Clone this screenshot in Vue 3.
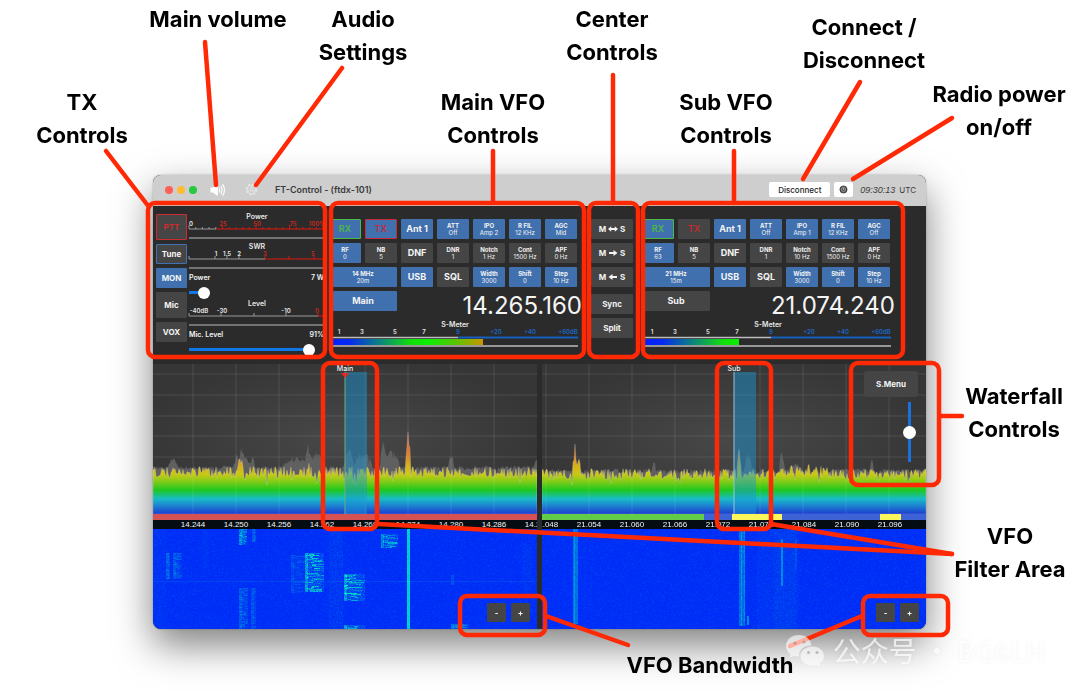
<script setup>
import { onMounted, ref } from 'vue'

const W = 1080
const H = 694

const captions = [
  { x: 218, y: 3, lines: ['Main volume'] },
  { x: 363, y: 3, lines: ['Audio', 'Settings'] },
  { x: 612, y: 3, lines: ['Center', 'Controls'] },
  { x: 864, y: 11, lines: ['Connect /', 'Disconnect'] },
  { x: 82, y: 86, lines: ['TX', 'Controls'] },
  { x: 493, y: 86, lines: ['Main VFO', 'Controls'] },
  { x: 726, y: 86, lines: ['Sub VFO', 'Controls'] },
  { x: 999, y: 78, lines: ['Radio power', 'on/off'] },
  { x: 1014, y: 380, lines: ['Waterfall', 'Controls'] },
  { x: 1010, y: 520, lines: ['VFO', 'Filter Area'] },
  { x: 710, y: 649, lines: ['VFO Bandwidth'] },
]
const captionStyle = (c) => ({ left: (c.x / W) * 100 + '%', top: (c.y / H) * 100 + '%' })

const frames = [
  [148, 203, 177, 154],
  [331, 203, 253, 154],
  [589, 203, 49, 154],
  [643, 203, 260, 154],
  [323, 363, 54, 166],
  [717, 363, 54, 166],
  [851, 363, 88, 122],
  [460, 596, 85, 39],
  [863, 596, 85, 39],
]
const leaders = [
  [205, 42, 216, 185],
  [342, 68, 256, 185],
  [106, 151, 149, 207],
  [493, 151, 493, 201],
  [613, 75, 613, 203],
  [734, 151, 734, 203],
  [860, 82, 803, 179],
  [952, 118, 853, 179],
  [940, 416, 962, 416],
  [378, 524, 952, 554],
  [771, 524, 952, 554],
  [546, 616, 628, 645],
  [862, 616, 790, 646],
]

const txButtons = [
  { t: 'PTT', c: 'tall ptt' },
  { t: 'Tune', c: 'tune' },
  { t: 'MON', c: 'on' },
  { t: 'Mic', c: 'tall' },
  { t: 'VOX', c: '' },
]
const powerMeter = {
  title: 'Power', split: 27,
  labels: [[2, '0'], [34, '25', 1], [68, '50', 1], [104, '75', 1], [128, '100%', 1]],
  ticks: Array.from({ length: 22 }, (_, i) => [i * 6.7, i % 5 ? 2 : 4]),
}
const swrMeter = {
  title: 'SWR', split: 76,
  labels: [[27, '1'], [38, '1.5'], [50, '2'], [76, '3', 1], [124, '5', 1]],
  ticks: [[0, 3], [26, 3], [38, 3], [50, 3], [76, 3], [100, 3], [125, 3]],
}
const micMeter = {
  title: 'Level', split: 129,
  labels: [[10, '-40dB'], [33, '-30'], [97, '-10'], [128, '0', 1]],
  ticks: [[0, 3], [32, 3], [65, 3], [97, 3], [129, 3]],
}

const vfos = [
  {
    id: 'main', name: 'Main', nameOn: true, freq: '14.265.160', level: 154,
    cells: [
      { t: 'RX', c: 'on rx' }, { t: 'TX', c: 'on txkey' }, { t: 'Ant 1', c: 'on' }, { t: 'ATT', s: 'Off', c: 'on' },
      { t: 'IPO', s: 'Amp 2', c: 'on' }, { t: 'R FIL', s: '12 KHz', c: 'on' }, { t: 'AGC', s: 'Mid', c: 'on' },
      { t: 'RF', s: '0', c: 'on' }, { t: 'NB', s: '5' }, { t: 'DNF' }, { t: 'DNR', s: '1' },
      { t: 'Notch', s: '1 Hz' }, { t: 'Cont', s: '1500 Hz' }, { t: 'APF', s: '0 Hz' },
      { t: '14 MHz', s: '20m', c: 'on wide' }, { t: 'USB', c: 'on' }, { t: 'SQL' },
      { t: 'Width', s: '3000', c: 'on' }, { t: 'Shift', s: '0', c: 'on' }, { t: 'Step', s: '10 Hz', c: 'on' },
    ],
  },
  {
    id: 'sub', name: 'Sub', nameOn: false, freq: '21.074.240', level: 97,
    cells: [
      { t: 'RX', c: 'on rx' }, { t: 'TX', c: 'txoff' }, { t: 'Ant 1', c: 'on' }, { t: 'ATT', s: 'Off', c: 'on' },
      { t: 'IPO', s: 'Amp 1', c: 'on' }, { t: 'R FIL', s: '12 KHz', c: 'on' }, { t: 'AGC', s: 'Off', c: 'on' },
      { t: 'RF', s: '63', c: 'on' }, { t: 'NB', s: '5' }, { t: 'DNF' }, { t: 'DNR', s: '1' },
      { t: 'Notch', s: '10 Hz' }, { t: 'Cont', s: '1500 Hz' }, { t: 'APF', s: '0 Hz' },
      { t: '21 MHz', s: '15m', c: 'on wide' }, { t: 'USB', c: 'on' }, { t: 'SQL' },
      { t: 'Width', s: '3000', c: 'on' }, { t: 'Shift', s: '0', c: 'on' }, { t: 'Step', s: '10 Hz', c: 'on' },
    ],
  },
]
const sLabels = [[10, '1'], [33, '3'], [66, '5'], [95, '7'], [129, '9', 1], [167, '+20', 1], [201, '+40', 1], [239, '+60dB', 1]]

function makeRandom(seed) {
  let s = seed
  return () => {
    s = (s * 1664525 + 1013904223) % 4294967296
    return s / 4294967296
  }
}

function trace(seed, base, peaks, rough) {
  const rnd = makeRandom(seed)
  let d = 'M0 150'
  for (let x = 0; x <= 384; x += 1) {
    let y = base + (rnd() - 0.5) * rough
    if (rnd() > 0.93) y += rnd() * rough
    let lift = 0
    for (const [px, w, h] of peaks) {
      const k = Math.max(0, 1 - Math.abs(x - px) / w)
      lift = Math.max(lift, h * Math.sqrt(k) * (0.6 + rnd() * 0.4))
    }
    d += `L${x} ${(y - lift).toFixed(1)}`
  }
  return d + 'L384 150Z'
}

const scopes = [
  {
    id: 'main', label: 'Main', mark: 192,
    live: trace(5, 108, [[87, 3, 15], [155, 2, 8], [255, 3, 40]], 11),
    ghost: trace(9, 104, [[20, 5, 11], [88, 8, 18], [99, 4, 12], [143, 14, 12], [155, 3, 30], [163, 9, 18], [196, 5, 24], [210, 10, 16], [230, 3, 34], [238, 9, 20], [298, 3, 16], [384, 4, 8]], 5),
    grid: [40, 83, 126, 169, 212, 255, 298, 341],
    ticks: [14.244, 14.25, 14.256, 14.262, 14.268, 14.274, 14.28, 14.286, 14.292].map((v, i) => [40 + i * 43, v.toFixed(3)]),
    bands: [[0, 384, '#d65252']],
  },
  {
    id: 'sub', label: 'Sub', mark: 192,
    live: trace(7, 110, [[33, 3, 30], [36, 3, 18], [197, 2, 26], [243, 6, 5], [262, 26, 5]], 11),
    ghost: trace(3, 107, [[33, 3, 14], [112, 2, 12], [197, 3, 24], [206, 4, 20], [240, 3, 20], [254, 8, 7], [330, 2, 14]], 5),
    grid: [4, 47, 90, 133, 176, 218, 261, 304, 347],
    ticks: [21.048, 21.054, 21.06, 21.066, 21.072, 21.078, 21.084, 21.09, 21.096].map((v, i) => [4 + i * 43, v.toFixed(3)]),
    bands: [[0, 162, '#62cc48'], [162, 222, '#3c62d6'], [190, 50, '#fbf75a'], [338, 21, '#fbf75a']],
  },
]

const falls = ref([])

function paint(canvas, seed, signals) {
  const ctx = canvas.getContext('2d')
  const rnd = makeRandom(seed)
  const img = ctx.createImageData(384, 100)
  for (let y = 0; y < 100; y++) {
    for (let x = 0; x < 384; x++) {
      let v = rnd() * rnd() * 0.12
      for (const [sx, sy, w, h, level, grain] of signals) {
        if (x >= sx && x < sx + w && y >= sy && y < sy + h) v += level * (1 - grain + grain * rnd())
      }
      v = Math.min(1, v)
      const i = (y * 384 + x) * 4
      img.data[i] = 0
      img.data[i + 1] = 42 + v * 196
      img.data[i + 2] = 248 - v * 50
      img.data[i + 3] = 255
    }
  }
  ctx.putImageData(img, 0, 0)
}

function streaks(x, y, w, h, level, seed) {
  const rnd = makeRandom(seed)
  const out = [[x, y, 3, h, level * 0.6, 0.5], [x, y, w, h, level * 0.35, 1]]
  for (let r = y; r < y + h; r += 1) {
    if (rnd() > 0.8) continue
    const a = Math.floor(rnd() * w * 0.6)
    out.push([x + a, r, Math.min(w - a, 3 + Math.floor(rnd() * w * 0.6)), 1, level * (0.3 + rnd() * 0.6), 0.4])
  }
  return out
}

onMounted(() => {
  paint(falls.value[0], 31, [
    [0, 52, 384, 1, 0.13, 0.3], [0, 0, 14, 100, 0.04, 1], [176, 0, 14, 100, 0.1, 1],
    [50, 0, 6, 40, 0.05, 1], [254, 0, 3, 100, 0.85, 0.1], [298, 46, 3, 10, 0.25, 0.8],
    [370, 15, 9, 46, 0.06, 1],
    ...streaks(13, 24, 4, 26, 0.3, 2), ...streaks(20, 24, 9, 26, 0.3, 3),
    ...streaks(86, 0, 8, 16, 0.6, 4), ...streaks(99, 0, 4, 13, 0.25, 5),
    ...streaks(86, 59, 9, 41, 0.3, 6), ...streaks(98, 59, 5, 41, 0.2, 7),
    ...streaks(138, 26, 14, 38, 0.2, 8), ...streaks(152, 24, 19, 39, 0.85, 9),
    ...streaks(191, 45, 21, 27, 0.85, 10), ...streaks(191, 96, 21, 4, 0.8, 11),
    ...streaks(228, 5, 17, 14, 0.7, 12), ...streaks(298, 95, 18, 5, 0.6, 13),
  ])
  paint(falls.value[1], 47, [
    [31, 0, 5, 95, 0.4, 0.3], [32, 0, 1, 95, 0.2, 0.2],
    [197, 2, 6, 95, 0.4, 0.5], [199, 2, 1, 95, 0.3, 0.5], [202, 2, 1, 90, 0.2, 0.5],
    [205, 87, 2, 9, 0.5, 0.2], [239, 10, 2, 47, 0.5, 0.4], [253, 10, 2, 30, 0.22, 0.8],
    [215, 0, 42, 100, 0.06, 1], [232, 0, 22, 100, 0.07, 1],
  ])
})
</script>

<template>
  <main class="stage">
    <section class="window">
      <header class="titlebar">
        <span class="dot red"></span><span class="dot yellow"></span><span class="dot green"></span>
        <button class="icon speaker" aria-label="Main volume">
          <svg viewBox="0 0 16 14" width="16" height="14" fill="none" stroke="#fff" stroke-width="1.1" stroke-linecap="round">
            <path d="M1 5h2.4L7.2 1.8v10.4L3.4 9H1z" fill="#fff" stroke-linejoin="round" />
            <path d="M9.2 5q1 2 0 4M11 3.2q2.200 3.800 0 7.600M12.800 1.600q3.400 5.400 0 10.800" />
          </svg>
        </button>
        <button class="icon gear" aria-label="Audio settings">
          <svg viewBox="0 0 14 14" width="13" height="13" fill="none" stroke="#ececec">
            <circle cx="7" cy="7" r="5.600" stroke-width="1.400" stroke-dasharray="2.200 2.198" />
            <circle cx="7" cy="7" r="4.500" stroke-width=".8" />
            <circle cx="7" cy="7" r="1.800" stroke-width=".8" />
            <path d="M7 5.200V2.500M8.600 8l2.300 1.300M5.400 8l-2.300 1.300" stroke-width=".7" />
          </svg>
        </button>
        <h1>FT-Control - (ftdx-101)</h1>
        <button class="connect">Disconnect</button>
        <button class="power" aria-label="Radio power">
          <svg viewBox="0 0 10 10" width="9" height="9" fill="none" stroke="#333">
            <circle cx="5" cy="5" r="4" fill="#555" stroke-width=".8" />
            <circle cx="5" cy="5" r="2.300" stroke="#bbb" stroke-width=".7" />
            <path d="M5 3.500v2" stroke="#ddd" stroke-width=".7" />
          </svg>
        </button>
        <time>09:30:13</time><span class="utc">UTC</span>
      </header>

      <div class="controls">
        <section class="tx">
          <div class="txkeys">
            <button v-for="b in txButtons" :key="b.t" class="key" :class="b.c">{{ b.t }}</button>
          </div>
          <div class="meters">
            <template v-for="(m, i) in [powerMeter, swrMeter, micMeter]" :key="m.title">
              <svg class="meter" viewBox="0 0 137 30">
                <text x="68" y="9" class="mtitle">{{ m.title }}</text>
                <text v-for="l in m.labels" :key="l[1]" :x="l[0]" y="16" class="mlabel" :class="{ hot: l[2] }">{{ l[1] }}</text>
                <path v-for="t in m.ticks" :key="t[0]" :d="`M${t[0]} 19v-${t[1]}`" :stroke="t[0] >= m.split ? '#c61c14' : '#9a9a9a'" stroke-width="1" />
                <path :d="`M0 19H${m.split}`" stroke="#9a9a9a" />
                <path :d="`M${m.split} 19H137`" stroke="#e01b10" />
                <path d="M0 28H137" stroke="#8c8c8c" stroke-width="1.500" />
              </svg>
              <label v-if="i === 1" class="slide">
                <span><b>Power</b><b>7 W</b></span>
                <input type="range" class="low" min="0" max="100" value="7" />
              </label>
              <label v-if="i === 2" class="slide">
                <span><b>Mic. Level</b><b>91%</b></span>
                <input type="range" class="high" min="0" max="100" value="91" />
              </label>
            </template>
          </div>
        </section>

        <template v-for="(v, i) in vfos" :key="v.id">
          <section class="vfo">
            <div class="keys">
              <button v-for="c in v.cells" :key="c.t" class="key" :class="[c.c, { two: c.s }]">
                {{ c.t }}<small v-if="c.s">{{ c.s }}</small>
              </button>
              <button class="key wide" :class="{ on: v.nameOn }">{{ v.name }}</button>
              <output class="freq">{{ v.freq }}</output>
            </div>
            <svg class="smeter" viewBox="0 0 248 30">
              <defs>
                <linearGradient :id="'s-' + v.id" gradientUnits="userSpaceOnUse" x1="0" x2="248" y1="0" y2="0">
                  <stop offset="0" stop-color="#0420ff" /><stop offset=".08" stop-color="#0428f4" />
                  <stop offset=".33" stop-color="#12e008" /><stop offset=".4" stop-color="#0af000" />
                  <stop offset=".5" stop-color="#50c800" /><stop offset=".62" stop-color="#c89600" />
                </linearGradient>
              </defs>
              <text x="126" y="10" class="mtitle">S-Meter</text>
              <text v-for="l in sLabels" :key="l[1]" :x="l[0]" y="17" class="mlabel" :class="{ blue: l[2] }">{{ l[1] }}</text>
              <path d="M0 20.500H129" stroke="#bcbcbc" stroke-width="1.400" />
              <path d="M129 20.500H249" stroke="#1560c0" stroke-width="2" />
              <rect x="0" y="22" :width="v.level" height="6" :fill="`url(#s-${v.id})`" />
              <path d="M0 29H249" stroke="#bcbcbc" stroke-width="1.500" />
            </svg>
          </section>
          <nav v-if="i === 0" class="center">
            <button class="key"><i>M</i>
              <svg viewBox="0 0 10 6" width="10" height="6" fill="#f4f4f4"><path d="M0 3 3.200.2v1.900h3.600V.2L10 3 6.800 5.800V3.900H3.200v1.900z" /></svg><i>S</i>
            </button>
            <button class="key"><i>M</i>
              <svg viewBox="0 0 10 6" width="10" height="6" fill="#f4f4f4"><path d="M1 1.900h4.500V0l4 3-4 3V4.100H1z" /></svg><i>S</i>
            </button>
            <button class="key"><i>M</i>
              <svg viewBox="0 0 10 6" width="10" height="6" fill="#f4f4f4"><path d="M9 1.900H4.500V0l-4 3 4 3V4.100H9z" /></svg><i>S</i>
            </button>
            <button class="key sync">Sync</button>
            <button class="key">Split</button>
          </nav>
        </template>
      </div>

      <div class="scopes">
        <section v-for="(s, i) in scopes" :key="s.id" class="scope">
          <div class="plot">
            <svg viewBox="0 0 384 150" preserveAspectRatio="none">
              <defs>
                <linearGradient :id="'g-' + s.id" gradientUnits="userSpaceOnUse" x1="0" x2="0" y1="70" y2="150">
                  <stop offset="0" stop-color="#d0584a" /><stop offset=".25" stop-color="#d87a28" />
                  <stop offset=".4" stop-color="#d8b018" /><stop offset=".5" stop-color="#ccc814" />
                  <stop offset=".6" stop-color="#7ccc18" /><stop offset=".7" stop-color="#1ec81e" />
                  <stop offset=".81" stop-color="#18bcc8" /><stop offset=".9" stop-color="#1c80d0" />
                  <stop offset="1" stop-color="#1c3cd0" />
                </linearGradient>
              </defs>
              <path d="M0 10H384M0 31H384M0 52H384M0 72H384M0 93H384" stroke="#fff" stroke-opacity=".07" stroke-width="1.500" />
              <path :d="s.ghost" fill="#606060" />
              <path :d="s.live" :fill="`url(#g-${s.id})`" stroke="#fff" stroke-opacity=".3" stroke-width=".6" />
              <path v-for="g in s.grid" :key="g" :d="`M${g} 0V150`" stroke="#fff" stroke-opacity=".07" stroke-width="1.500" />
              <rect :x="s.mark" y="8" width="22" height="142" fill="#1a96d4" fill-opacity=".48" />
              <path :d="`M${s.mark} 8V150`" :stroke="i ? '#9cc4d0' : '#6fae86'" stroke-width="1" />
              <path v-if="i === 0" :d="`M${s.mark - 4} 9h8l-4 5z`" fill="#e82a20" />
            </svg>
            <span class="marker">{{ s.label }}</span>
            <template v-if="i === 1">
              <button class="key smenu">S.Menu</button>
              <input type="range" class="gain" aria-label="Waterfall level" min="0" max="100" value="50" />
            </template>
          </div>
          <svg class="bands" viewBox="0 0 384 6" preserveAspectRatio="none">
            <rect v-for="b in s.bands" :key="b[0]" :x="b[0]" y="0" :width="b[1]" height="6" :fill="b[2]" />
          </svg>
          <div class="axis">
            <span v-for="t in s.ticks" :key="t[1]" :style="{ left: (t[0] / 384) * 100 + '%' }">{{ t[1] }}</span>
          </div>
          <div class="fall">
            <canvas ref="falls" width="384" height="100"></canvas>
            <div class="zoomers">
              <button class="key" aria-label="Narrower">-</button>
              <button class="key" aria-label="Wider">+</button>
            </div>
          </div>
        </section>
      </div>
    </section>

    <svg class="overlay" viewBox="0 0 1080 694" preserveAspectRatio="none">
      <g fill="none" stroke="#ff2a05" stroke-width="4.500" stroke-linecap="round">
        <rect v-for="(f, i) in frames" :key="'f' + i" :x="f[0]" :y="f[1]" :width="f[2]" :height="f[3]" rx="7" />
        <path v-for="(l, i) in leaders" :key="'l' + i" :d="`M${l[0]} ${l[1]}L${l[2]} ${l[3]}`" />
      </g>
    </svg>

    <p v-for="c in captions" :key="c.x" class="caption" :style="captionStyle(c)">
      <span v-for="l in c.lines" :key="l">{{ l }}</span>
    </p>

    <div class="watermark">
      <svg viewBox="0 0 40 32" width="40" height="32">
        <g fill="#fff" fill-opacity=".62">
          <path d="M14 1C6.500 1 1 5.800 1 12c0 3.500 1.800 6.300 4.600 8.300L4.500 24l4.300-2.200c1.700.5 3.200.7 5 .7-.2-6.500 5-11 12.700-11C25.500 5 20.500 1 14 1z" />
          <path d="M27.500 12.500c-7 0-12 4.300-12 9.500s5 9.500 12 9.500c1.500 0 3-.2 4.300-.7l3.700 2-1-3.200c2.800-1.900 4.500-4.600 4.500-7.600 0-5.200-4.800-9.500-11.500-9.500z" />
        </g>
        <g fill="#888" fill-opacity=".5">
          <circle cx="10" cy="9" r="1.600" /><circle cx="19" cy="8" r="1.600" />
          <circle cx="23.500" cy="18.500" r="1.500" /><circle cx="32" cy="18.500" r="1.500" />
        </g>
      </svg>
      <span>公众号 · BG6LH</span>
    </div>
  </main>
</template>

<style>
body {
  background: #fff;
}
</style>

<style scoped>
.stage {
  position: relative;
  display: flow-root;
  overflow: hidden;
  font-family: Inter, "Liberation Sans", "Noto Sans CJK SC", sans-serif;
  color: #f4f4f4;
}
.stage * {
  box-sizing: border-box;
}
.window {
  margin: 175px 154px 65px 153px;
  border-radius: 8px;
  overflow: hidden;
  background: #2b2b2b;
  box-shadow: 0 16px 38px rgba(0, 0, 0, 0.5), 0 0 2px rgba(0, 0, 0, 0.3);
}
button {
  font: inherit;
  color: inherit;
  border: 0;
  padding: 0;
  background: none;
}
svg {
  display: block;
}
.titlebar {
  display: flex;
  align-items: center;
  height: 31px;
  padding: 0 10px 2px 12px;
  background: #cecece;
  color: #3c3c3c;
}
.dot {
  width: 8px;
  height: 8px;
  margin-right: 4px;
  border-radius: 50%;
}
.red { background: #fe5f57; }
.yellow { background: #febc2e; }
.green { background: #28c840; }
.speaker { margin-left: 9px; }
.gear { margin-left: 19px; }
h1 {
  flex: 1;
  margin: 0 0 0 17px;
  font-size: 9px;
  font-weight: 600;
}
.connect,
.power {
  height: 15px;
  border-radius: 2px;
  background: #fff;
  color: #222;
}
.connect {
  width: 61px;
  font-size: 8px;
  font-weight: 500;
}
.power {
  display: grid;
  place-items: center;
  width: 19px;
  margin: 0 7px 0 4px;
}
time {
  width: 39px;
  font: italic 9px "Liberation Sans", sans-serif;
}
.utc {
  font-size: 8px;
}
.controls {
  display: flex;
  height: 157px;
  padding: 0 36px 0 3px;
}
.key {
  display: flex;
  align-items: center;
  justify-content: center;
  height: 20px;
  border-radius: 1px;
  background: #454545;
  font-size: 9px;
  font-weight: 700;
  line-height: 10px;
  white-space: nowrap;
}
.key.on {
  background: #4070ae;
}
.two {
  flex-direction: column;
  font-size: 6px;
  line-height: 7px;
}
.two small {
  font-size: 6px;
  font-weight: 400;
}
.tall { height: 26px; }
.ptt { border: 1px solid #cc2c30; color: #cc2c30; }
.tune { border: 1px solid #3f72b4; }
.rx { border: 1px solid #4cb848; color: #4cb848; font-weight: 600; }
.txkey { border: 1px solid #c82c3c; color: #c02c40; font-weight: 600; }
.txoff { color: #c02c30; font-weight: 600; }
.tx {
  display: flex;
  flex: 0 0 170px;
  gap: 2px;
  padding-top: 8px;
}
.txkeys {
  display: flex;
  flex-direction: column;
  flex: 0 0 31px;
  gap: 4px;
}
.meters {
  flex: 1;
  margin-top: -4px;
}
.txkeys .key {
  font-size: 8px;
}
.meter {
  width: 100%;
  height: 30px;
  overflow: visible;
}
.mtitle {
  font-size: 7px;
  font-weight: 600;
  fill: #e8e8e8;
  text-anchor: middle;
}
.mlabel {
  font-size: 6px;
  font-weight: 600;
  fill: #e8e8e8;
  text-anchor: middle;
}
.hot { fill: #c8281e; }
.blue { fill: #1a66c8; }
.slide {
  display: block;
  height: 27px;
  padding-top: 3px;
}
.slide span {
  display: flex;
  justify-content: space-between;
  margin-bottom: 3px;
  padding-right: 2px;
  font-size: 7px;
  line-height: 10px;
}
.slide b {
  font-weight: 600;
}
input[type="range"] {
  appearance: none;
  display: block;
  margin: 0;
  background: none;
}
.slide input {
  width: 100%;
  height: 13px;
}
input::-webkit-slider-runnable-track {
  background: linear-gradient(#0f78e8, #0f78e8) no-repeat left center / 10% 3px;
}
.high::-webkit-slider-runnable-track {
  background-size: 88% 3px;
}
input::-webkit-slider-thumb {
  appearance: none;
  width: 12px;
  height: 12px;
  border-radius: 50%;
  background: #fff;
}
.vfo {
  flex: 1;
  min-width: 0;
  padding-top: 13px;
}
.tx + .vfo {
  margin-left: 3px;
}
.keys {
  display: grid;
  grid-template-columns: repeat(7, 1fr);
  gap: 4px;
}
.wide {
  grid-column: span 2;
}
.freq {
  grid-column: span 5;
  height: 20px;
  margin-right: -5px;
  font-size: 24px;
  line-height: 30px;
  text-align: right;
  white-space: nowrap;
}
.smeter {
  width: 100%;
  height: 30px;
  margin-top: 6px;
  overflow: visible;
}
.center {
  display: flex;
  flex-direction: column;
  flex: 0 0 42px;
  gap: 4px;
  margin: 13px 9px 0 14px;
}
.center .key {
  gap: 2px;
  font-size: 8px;
}
.center i {
  font-style: normal;
}
.sync {
  margin-top: 3px;
}
.scopes {
  display: flex;
  gap: 5px;
  padding-top: 1px;
}
.scope {
  flex: 1;
  min-width: 0;
}
.plot {
  position: relative;
  height: 150px;
  background: radial-gradient(ellipse at center, #484848, #363636 75%);
}
.plot > svg {
  width: 100%;
  height: 100%;
}
.marker {
  position: absolute;
  top: 0;
  left: 50%;
  transform: translateX(-50%);
  font-size: 7px;
  font-weight: 500;
  line-height: 10px;
}
.smenu {
  position: absolute;
  top: 7px;
  right: 8px;
  width: 54px;
  height: 26px;
  border-radius: 2px;
  font-size: 8px;
}
.gain {
  position: absolute;
  top: 38px;
  right: 10px;
  width: 13px;
  height: 60px;
  writing-mode: vertical-lr;
}
.gain::-webkit-slider-runnable-track {
  background: linear-gradient(#1a70dc, #1a70dc) no-repeat center / 3px 100%;
}
.gain::-webkit-slider-thumb {
  width: 13px;
  height: 13px;
}
.bands {
  width: 100%;
  height: 6px;
}
.axis {
  position: relative;
  height: 9px;
  overflow: hidden;
  background: #050c12;
  font: 8px/9px "Liberation Sans", sans-serif;
}
.axis span {
  position: absolute;
  transform: translateX(-50%);
}
.fall {
  position: relative;
  height: 100px;
}
canvas {
  display: block;
  width: 100%;
  height: 100%;
}
.zoomers {
  position: absolute;
  right: 7px;
  bottom: 7px;
  display: flex;
  gap: 5px;
}
.zoomers .key {
  width: 19px;
  height: 19px;
  font-size: 8px;
}
.overlay {
  position: absolute;
  inset: 0;
  width: 100%;
  height: 100%;
  pointer-events: none;
}
.caption {
  position: absolute;
  margin: 0;
  transform: translateX(-50%);
  color: #000;
  font-size: 22px;
  font-weight: 700;
  line-height: 33px;
  text-align: center;
  white-space: nowrap;
}
.caption span {
  display: block;
}
.watermark {
  position: absolute;
  right: 34px;
  bottom: 26px;
  display: flex;
  align-items: center;
  gap: 8px;
  color: rgba(255, 255, 255, 0.7);
  font: 28px/36px "Noto Sans CJK SC", sans-serif;
  text-shadow: 0 0 4px rgba(0, 0, 0, 0.06);
  white-space: nowrap;
}
</style>
